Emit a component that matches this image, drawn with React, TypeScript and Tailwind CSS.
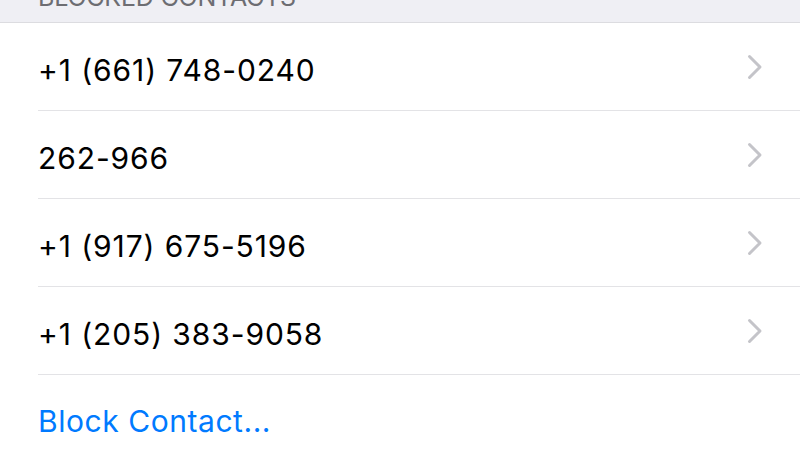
const contacts = ['+1 (661) 748-0240', '262-966', '+1 (917) 675-5196', '+1 (205) 383-9058'];

function Chevron() {
  return (
    <svg width="16" height="26" viewBox="0 0 16 26" fill="none" className="shrink-0">
      <path d="M2.5 2.5 L13 13 L2.5 23.5" stroke="#c4c4c9" strokeWidth="3" strokeLinecap="round" strokeLinejoin="round" />
    </svg>
  );
}

export default function App() {
  return (
    <div className="w-[800px] h-[452px] overflow-hidden bg-white" style={{ fontFamily: 'Inter, "Liberation Sans", sans-serif' }}>
      {/* Section header, clipped at the top */}
      <div className="h-[23px] bg-[#efeff4] overflow-hidden flex items-end pl-[38px] pb-[12px] border-b-[1.5px] border-[#dcdce0]">
        <span className="text-[25px] leading-none text-[#6d6d72] tracking-[-0.2px] uppercase whitespace-nowrap">Blocked Contacts</span>
      </div>

      <div className="pl-[38px]">
        {contacts.map((c) => (
          <div key={c} className="h-[88px] flex items-center pr-[37px] border-b-[1.5px] border-[#e3e3e6]">
            <span className="flex-1 text-[30px] text-black tracking-[0.9px] pt-[7px]">{c}</span>
            <Chevron />
          </div>
        ))}
        <div className="h-[90px] flex items-center">
          <span className="text-[30px] text-[#007aff] tracking-[0.55px] pt-[2px]">Block Contact...</span>
        </div>
      </div>
    </div>
  );
}
